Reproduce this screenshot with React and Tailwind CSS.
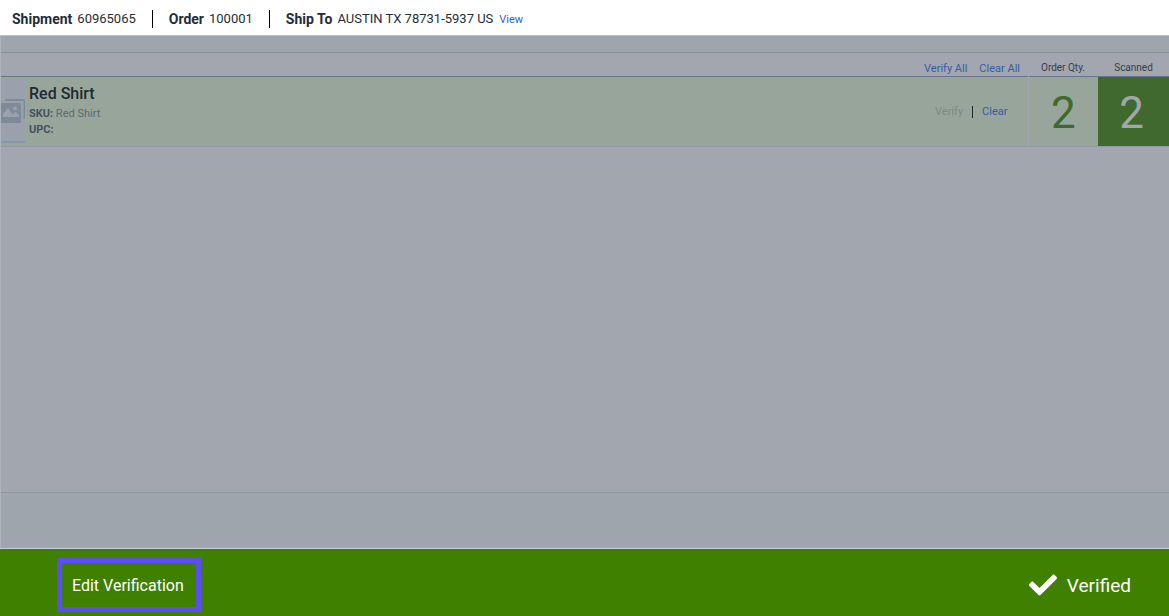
import { FaCheck } from "react-icons/fa";

const shipment = [
  { label: "Shipment", value: "60965065" },
  { label: "Order", value: "100001" },
  { label: "Ship To", value: "AUSTIN TX 78731-5937 US", link: "View" },
];

const items = [{ name: "Red Shirt", sku: "Red Shirt", upc: "", ordered: 2, scanned: 2 }];

function ImagesIcon() {
  return (
    <svg viewBox="0 0 24 24" className="h-6 w-6" aria-hidden="true">
      <path d="M4 2V1.500A1.500 1.500 0 0 1 5.500 0H22.500A1.500 1.500 0 0 1 24 1.500V18.500A1.500 1.500 0 0 1 22.500 20V2Z" fill="#7f8a98" />
      <path
        fillRule="evenodd"
        d="M0 4H18.500A1.500 1.500 0 0 1 20 5.500V22.500A1.500 1.500 0 0 1 18.500 24H0ZM2 18H18V16L14.500 12.500L11.500 15.500L7 9L2 15ZM14 7.500A2 2 0 1 0 14 11.500A2 2 0 1 0 14 7.500Z"
        fill="#7f8a98"
      />
    </svg>
  );
}

function ShipmentBar() {
  return (
    <header className="flex h-9 shrink-0 items-center border-b border-[#b9c2cc] bg-white pt-[3px] pl-3">
      {shipment.map((field) => (
        <div key={field.label} className="mr-4 flex items-center border-r border-black pr-4 leading-[18px] last:mr-0 last:border-0">
          <span className="mr-[5px] text-sm leading-[18px] font-bold">{field.label}</span>
          <span className="text-[13px]">{field.value}</span>
          {field.link && (
            <a href="#view" className="ml-[6px] pt-0.5 text-[11px] text-[#2b62dc]">
              {field.link}
            </a>
          )}
        </div>
      ))}
    </header>
  );
}

function ItemsTable() {
  return (
    <table className="w-full table-fixed border-collapse">
      <colgroup>
        <col />
        <col className="w-[142px]" />
        <col className="w-[70px]" />
        <col className="w-[71px]" />
      </colgroup>
      <thead>
        <tr className="h-[23px] border-b border-[#66758a] text-[10px] leading-3 text-[#333f4b]">
          <td />
          <td className="pt-[10px] pr-2 text-right whitespace-nowrap">
            <button className="text-[11px] text-[#365ca5]">Verify All</button>
            <button className="ml-3 text-[11px] text-[#365ca5]">Clear All</button>
          </td>
          <th className="pt-2 font-normal">Order Qty.</th>
          <th className="pt-2 font-normal">Scanned</th>
        </tr>
      </thead>
      <tbody>
        {items.map((item) => (
          <tr key={item.name} className="h-[70px] border-b border-[#8f9ca6] bg-[#98a59b]">
            <td>
              <div className="flex">
                <div className="mr-1 flex h-16 w-6 items-center border-b-2 border-[#8994a4] bg-[#9ba1ac] pt-0.5">
                  <ImagesIcon />
                </div>
                <div className="pt-[3px] text-[11px] leading-4 text-[#5c6875]">
                  <h2 className="text-base leading-6 font-medium text-[#1f2a30]">{item.name}</h2>
                  <p>
                    <b className="text-[#46525f]">SKU:</b> {item.sku}
                  </p>
                  <p>
                    <b className="text-[#46525f]">UPC:</b> {item.upc}
                  </p>
                </div>
              </div>
            </td>
            <td className="border-r border-[#a0a5ae] pt-0.5 pr-5 text-right text-[11px]">
              <button disabled className="text-[#7c8988]">Verify</button>
              <span className="mx-[9px] inline-block h-3 border-r border-[#1f2a30] align-middle" />
              <button className="text-[#365ca5]">Clear</button>
            </td>
            <td className="pt-1 text-center text-[44px] leading-none text-[#406a2d]">{item.ordered}</td>
            <td className="bg-[#406a2d] pt-1 pr-1 text-center text-[44px] leading-none text-[#a2a6af]">{item.scanned}</td>
          </tr>
        ))}
      </tbody>
    </table>
  );
}

export default function App() {
  return (
    <div className="flex min-h-screen flex-col bg-[#a2a6af] font-[Roboto,sans-serif] text-[#232d38]">
      <ShipmentBar />
      <main className="flex flex-1 flex-col border-l border-[#adb4bb]">
        <div className="h-[17px] border-b border-[#84919d] bg-[#9ea5ac]" />
        <ItemsTable />
        <div className="mt-auto h-14 border-t border-[#8f98a2] bg-[#9ea5ac]" />
      </main>
      <footer className="flex shrink-0 items-center justify-between border-t border-[#c5ccd2] bg-[#3f8000] pt-[9px] pr-[38px] pb-1 pl-[57px] text-white">
        <button className="h-[54px] border-[5px] border-[#5d4df8] pt-0.5 pr-3 pl-[10px] text-base">Edit Verification</button>
        <div className="flex items-center gap-[10px] text-[19px]">
          <FaCheck size={28} />
          <span className="pt-0.5">Verified</span>
        </div>
      </footer>
    </div>
  );
}
